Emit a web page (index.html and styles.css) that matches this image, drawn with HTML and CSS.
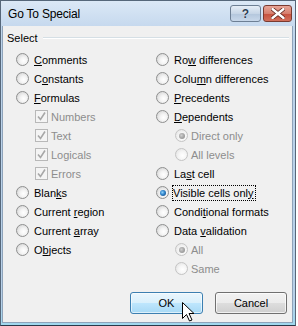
FILE: index.html
```html
<!DOCTYPE html>
<html>
<head>
<meta charset="utf-8">
<link rel="stylesheet" href="styles.css">
</head>
<body>
<div class="window">
  <div class="titlebar">
    <span class="title">Go To Special</span>
    <div class="tbuttons">
      <div class="tbtn help">?</div>
      <div class="tbtn close">
        <svg width="14" height="11" viewBox="0 0 14 11"><path d="M1.5 1 L12.5 10 M12.5 1 L1.5 10" stroke="#5a2018" stroke-width="4" stroke-linecap="round"/><path d="M1.5 1 L12.5 10 M12.5 1 L1.5 10" stroke="#ffffff" stroke-width="2.4" stroke-linecap="round"/></svg>
      </div>
    </div>
  </div>
  <div class="client">
    <div class="legend"><span class="legend-text">Select</span><span class="legend-line"></span></div>
    <div class="cols">
      <div class="col">
        <div class="row"><span class="radio"></span><span class="lbl"><u>C</u>omments</span></div>
        <div class="row"><span class="radio"></span><span class="lbl">C<u>o</u>nstants</span></div>
        <div class="row"><span class="radio"></span><span class="lbl"><u>F</u>ormulas</span></div>
        <div class="row sub"><span class="check"><svg width="11" height="11" viewBox="0 0 11 11"><path d="M2 5.5 L4.5 8.5 L9 1.5" fill="none" stroke="#a7a7a7" stroke-width="1.6"/></svg></span><span class="lbl dis">Numbers</span></div>
        <div class="row sub"><span class="check"><svg width="11" height="11" viewBox="0 0 11 11"><path d="M2 5.5 L4.5 8.5 L9 1.5" fill="none" stroke="#a7a7a7" stroke-width="1.6"/></svg></span><span class="lbl dis">Text</span></div>
        <div class="row sub"><span class="check"><svg width="11" height="11" viewBox="0 0 11 11"><path d="M2 5.5 L4.5 8.5 L9 1.5" fill="none" stroke="#a7a7a7" stroke-width="1.6"/></svg></span><span class="lbl dis">Logicals</span></div>
        <div class="row sub"><span class="check"><svg width="11" height="11" viewBox="0 0 11 11"><path d="M2 5.5 L4.5 8.5 L9 1.5" fill="none" stroke="#a7a7a7" stroke-width="1.6"/></svg></span><span class="lbl dis">Errors</span></div>
        <div class="row"><span class="radio"></span><span class="lbl">Blan<u>k</u>s</span></div>
        <div class="row"><span class="radio"></span><span class="lbl">Current <u>r</u>egion</span></div>
        <div class="row"><span class="radio"></span><span class="lbl">Current <u>a</u>rray</span></div>
        <div class="row"><span class="radio"></span><span class="lbl">O<u>b</u>jects</span></div>
      </div>
      <div class="col">
        <div class="row"><span class="radio"></span><span class="lbl">Ro<u>w</u> differences</span></div>
        <div class="row"><span class="radio"></span><span class="lbl">Colu<u>m</u>n differences</span></div>
        <div class="row"><span class="radio"></span><span class="lbl"><u>P</u>recedents</span></div>
        <div class="row"><span class="radio"></span><span class="lbl"><u>D</u>ependents</span></div>
        <div class="row sub"><span class="radio dis on"></span><span class="lbl dis">Direct only</span></div>
        <div class="row sub"><span class="radio dis"></span><span class="lbl dis">All levels</span></div>
        <div class="row"><span class="radio"></span><span class="lbl">La<u>s</u>t cell</span></div>
        <div class="row"><span class="radio on"></span><span class="lbl focus">Visible cells onl<u>y</u></span></div>
        <div class="row"><span class="radio"></span><span class="lbl">Condi<u>t</u>ional formats</span></div>
        <div class="row"><span class="radio"></span><span class="lbl">Data <u>v</u>alidation</span></div>
        <div class="row sub"><span class="radio dis on"></span><span class="lbl dis">All</span></div>
        <div class="row sub"><span class="radio dis"></span><span class="lbl dis">Same</span></div>
      </div>
    </div>
    <div class="buttons">
      <div class="btn ok">OK</div>
      <div class="btn cancel">Cancel</div>
    </div>
  </div>
  <svg class="cursor" width="13" height="20" viewBox="0 0 13 20"><path d="M0.5 0.5 L0.5 16.5 L4.5 12.5 L7.5 19 L10 18 L7 11.5 L12 11.5 Z" fill="#ffffff" stroke="#000000" stroke-width="1" stroke-linejoin="miter"/></svg>
</div>
</body>
</html>
```
FILE: styles.css
```css
html, body {
  margin: 0;
  padding: 0;
  background: #ffffff;
}
body {
  font-family: "Liberation Sans", Arial, sans-serif;
  font-size: 11px;
  color: #000;
}
.window {
  position: relative;
  width: 296px;
  height: 326px;
  box-sizing: border-box;
  border: 1px solid #56677a;
  border-bottom-color: #2a3848;
  background: linear-gradient(#cfe0f1, #bcd3ea 40px, #b7d0e8 300px, #9fd8ee);
  display: flex;
  flex-direction: column;
  padding: 0 2px 2px 1px;
}
.titlebar {
  height: 25px;
  flex: none;
  display: flex;
  align-items: center;
  justify-content: space-between;
  background: linear-gradient(#dbe8f6, #c6d9ee);
  margin: 0 -2px 0 -1px;
  padding: 0 3px 0 7px;
}
.title {
  font-size: 12px;
  letter-spacing: -0.2px;
  color: #000;
  padding-top: 1px;
}
.tbuttons {
  display: flex;
  gap: 2px;
  align-self: flex-start;
  margin-top: 4px;
}
.tbtn {
  height: 15px;
  border: 1px solid #6d7f94;
  border-radius: 3px;
  display: flex;
  align-items: center;
  justify-content: center;
}
.help {
  width: 29px;
  background: linear-gradient(#e6eef7, #c6d5e6 50%, #b3c6dc 51%, #c8d8ea);
  color: #2c3e55;
  font-weight: bold;
  font-size: 12px;
  text-shadow: 0 0 1px #fff;
}
.close {
  width: 27px;
  border-color: #7a3a30;
  background: linear-gradient(#e8a597, #d67f6e 50%, #c6503d 51%, #d2705c);
}
.client {
  flex: 1;
  background: #f0f0f0;
  border: 1px solid #8ea3ba;
  border-top: none;
  position: relative;
  display: flex;
  flex-direction: column;
}
.legend {
  display: flex;
  align-items: center;
  height: 22px;
  padding: 0 3px 0 4px;
  margin-top: 1px;
}
.legend-text {
  padding-right: 5px;
}
.legend-line {
  flex: 1;
  height: 0;
  border-top: 1px solid #d5dfe5;
  border-bottom: 1px solid #ffffff;
}
.cols {
  display: grid;
  grid-template-columns: 140px 1fr;
  padding-left: 13px;
  margin-top: 1px;
}
.row {
  height: 19px;
  display: flex;
  align-items: center;
}
.row.sub {
  padding-left: 19px;
}
.radio {
  width: 11px;
  height: 11px;
  flex: none;
  border-radius: 50%;
  border: 1px solid #8e8f8f;
  background: radial-gradient(circle at 60% 60%, #ffffff 0, #f4f4f4 35%, #d8d8d8 80%);
  margin-right: 5px;
  position: relative;
  box-sizing: content-box;
}
.radio.on::after {
  content: "";
  position: absolute;
  left: 2.5px;
  top: 2.5px;
  width: 6px;
  height: 6px;
  border-radius: 50%;
  background: radial-gradient(circle at 40% 40%, #8fd2fb 0, #2f82c8 45%, #123e72 100%);
}
.radio.dis {
  border-color: #c4c4c4;
  background: radial-gradient(circle at 60% 60%, #ffffff 0, #f6f6f6 40%, #e6e6e6 80%);
  margin-right: 3px;
}
.radio.dis.on::after {
  background: radial-gradient(circle at 40% 40%, #d0d0d0 0, #a6a6a6 50%, #8a8a8a 100%);
}
.check {
  width: 11px;
  height: 11px;
  flex: none;
  border: 1px solid #b8b8b8;
  background: #f4f4f4;
  margin-right: 3px;
  display: flex;
  align-items: center;
  justify-content: center;
}
.lbl {
  white-space: nowrap;
}
.lbl.dis {
  color: #8d8d8d;
}
.lbl.focus {
  outline: 1px dotted #000;
  outline-offset: 0;
  padding: 1px 1px 1px 0;
  margin-left: -1px;
}
u {
  text-decoration: underline;
  text-underline-offset: 1px;
}
.buttons {
  display: flex;
  justify-content: flex-end;
  gap: 12px;
  padding-right: 5px;
  margin-top: 14px;
}
.btn {
  height: 20px;
  border-radius: 3px;
  display: flex;
  align-items: center;
  justify-content: center;
  box-sizing: content-box;
}
.ok {
  width: 71px;
  border: 1px solid #3c7fb1;
  background: linear-gradient(#eaf6fd, #d9f0fc 50%, #bee6fd 51%, #a7d9f5);
  box-shadow: inset 0 0 0 1px rgba(255,255,255,0.6);
}
.cancel {
  width: 70px;
  border: 1px solid #707070;
  background: linear-gradient(#f2f2f2, #ebebeb 50%, #dddddd 51%, #cfcfcf);
  box-shadow: inset 0 0 0 1px rgba(255,255,255,0.7);
}
.cursor {
  position: absolute;
  left: 181px;
  top: 301px;
}
```
